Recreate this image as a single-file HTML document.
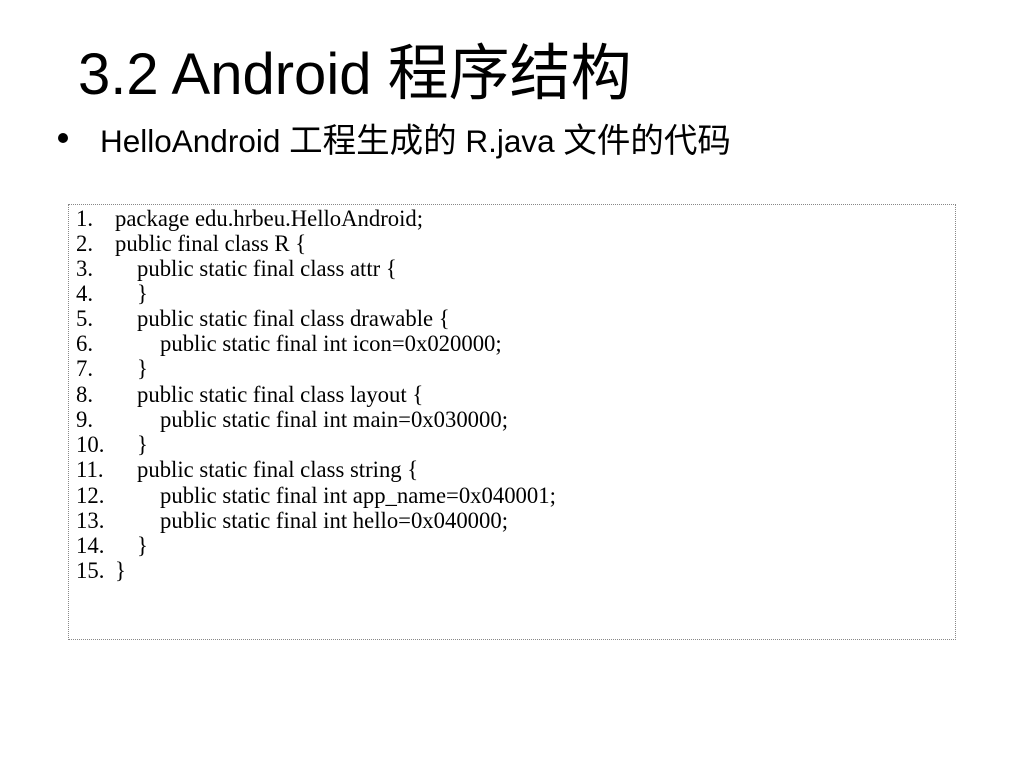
<!DOCTYPE html>
<html><head><meta charset="utf-8"><style>
body{margin:0;width:1024px;height:768px;background:#fff;position:relative;overflow:hidden}
.t{position:absolute;left:78px;top:23px;font:58px "Liberation Sans",sans-serif;color:#000;white-space:nowrap;line-height:80px}
.t .c{font:61px "Noto Sans CJK SC",sans-serif}
.b{position:absolute;left:100px;top:113px;font:31.5px "Liberation Sans",sans-serif;white-space:nowrap;line-height:46px}
.b .c{font:33.5px "Noto Sans CJK SC",sans-serif}
.dot{position:absolute;left:58px;top:133px;width:10px;height:10px;border-radius:50%;background:#000}
.box{position:absolute;left:68px;top:204px;width:888px;height:436px;border:1px dotted #888;box-sizing:border-box}
.r{position:absolute;left:76px;height:25px;font:22.7px "Liberation Serif",serif;white-space:nowrap;line-height:25px}
.r span{position:absolute;left:0;top:0}
</style></head><body>
<div class="t">3.2 Android <span class="c">程序结构</span></div>
<div class="dot"></div>
<div class="b">HelloAndroid <span class="c">工程生成的</span> R.java <span class="c">文件的代码</span></div>
<div class="box"></div>
<div class="r" style="top:206px"><span>1.</span><span style="left:39px">package edu.hrbeu.HelloAndroid;</span></div>
<div class="r" style="top:231px"><span>2.</span><span style="left:39px">public final class R {</span></div>
<div class="r" style="top:256px"><span>3.</span><span style="left:61px">public static final class attr {</span></div>
<div class="r" style="top:281px"><span>4.</span><span style="left:61px">}</span></div>
<div class="r" style="top:306px"><span>5.</span><span style="left:61px">public static final class drawable {</span></div>
<div class="r" style="top:331px"><span>6.</span><span style="left:84px">public static final int icon=0x020000;</span></div>
<div class="r" style="top:356px"><span>7.</span><span style="left:61px">}</span></div>
<div class="r" style="top:382px"><span>8.</span><span style="left:61px">public static final class layout {</span></div>
<div class="r" style="top:407px"><span>9.</span><span style="left:84px">public static final int main=0x030000;</span></div>
<div class="r" style="top:432px"><span>10.</span><span style="left:61px">}</span></div>
<div class="r" style="top:457px"><span>11.</span><span style="left:61px">public static final class string {</span></div>
<div class="r" style="top:483px"><span>12.</span><span style="left:84px">public static final int app_name=0x040001;</span></div>
<div class="r" style="top:508px"><span>13.</span><span style="left:84px">public static final int hello=0x040000;</span></div>
<div class="r" style="top:533px"><span>14.</span><span style="left:61px">}</span></div>
<div class="r" style="top:558px"><span>15.</span><span style="left:39px">}</span></div>
</body></html>
